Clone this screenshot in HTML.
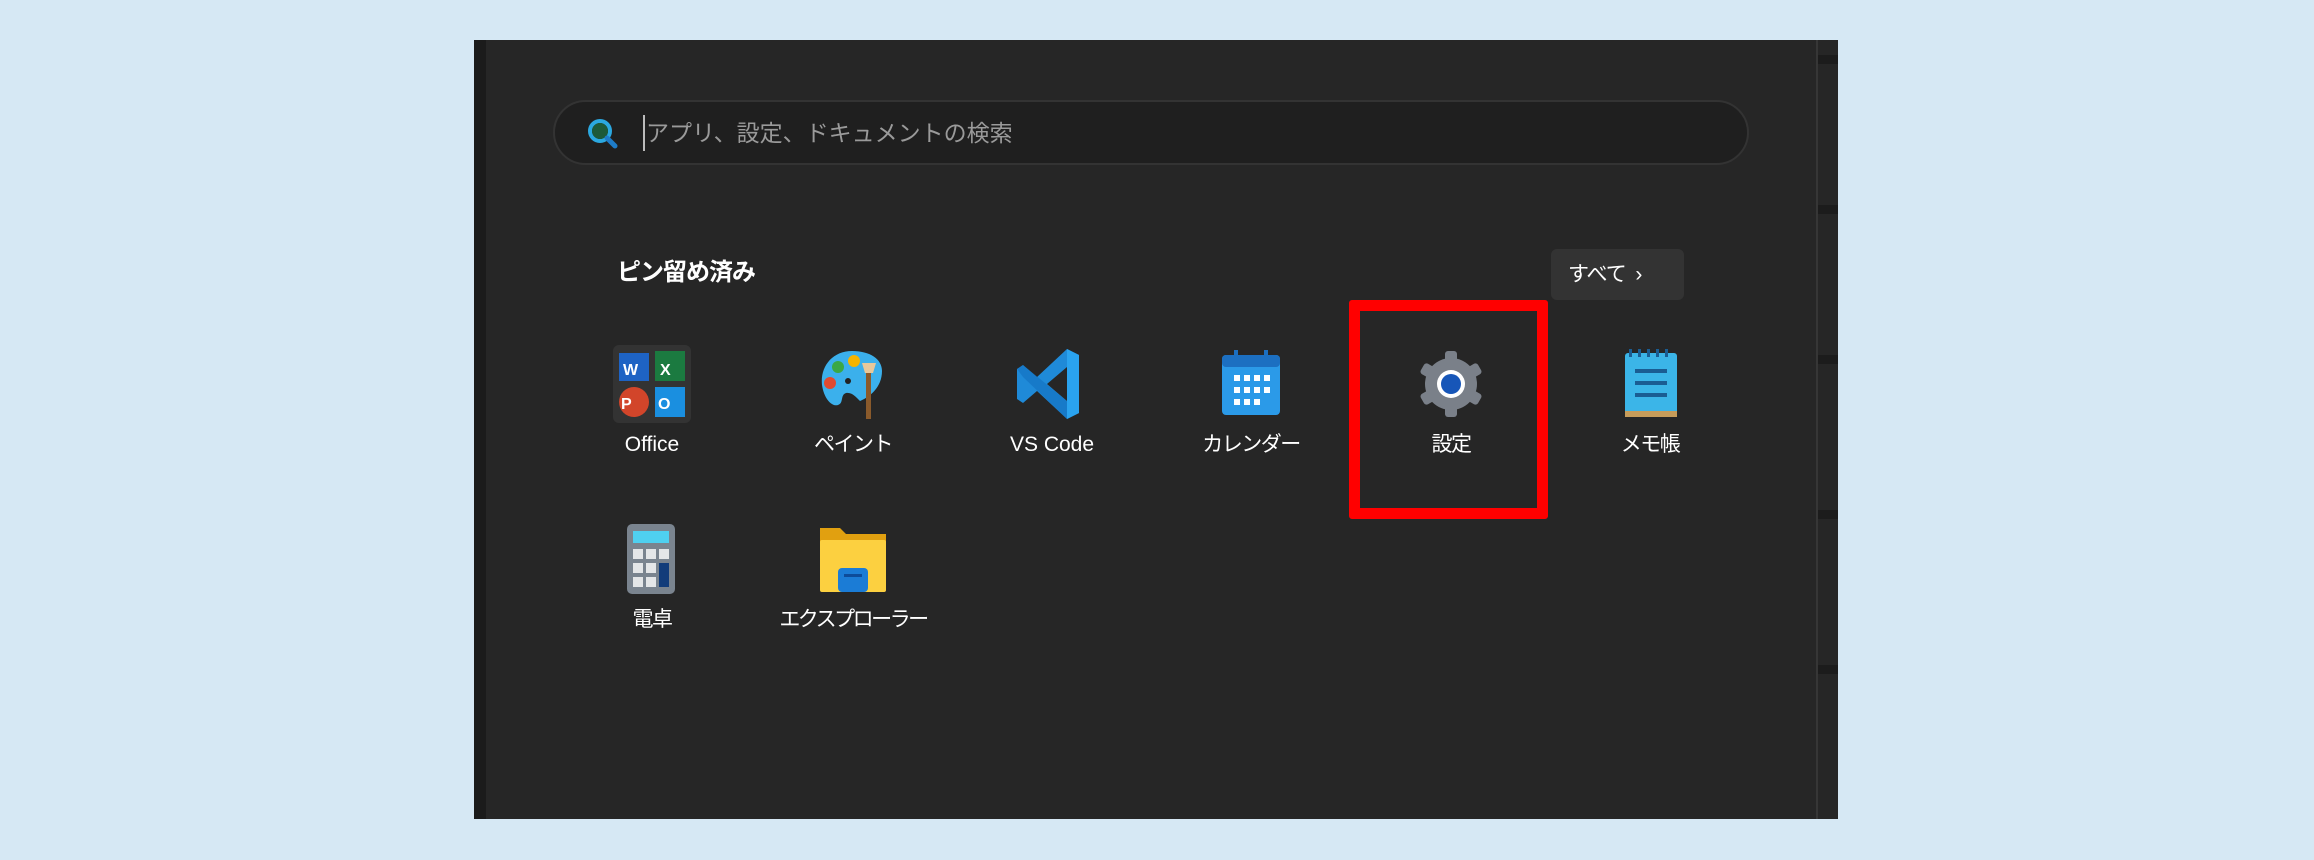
<!DOCTYPE html>
<html><head><meta charset="utf-8"><style>
*{margin:0;padding:0;box-sizing:border-box}
body{width:2314px;height:860px;background:#d6e8f4;position:relative;overflow:hidden;font-family:"Liberation Sans","Noto Sans CJK JP",sans-serif}
.panel{position:absolute;left:474px;top:40px;width:1364px;height:779px;background:#262626}
.lstrip{position:absolute;left:474px;top:40px;width:12px;height:779px;background:#1b1b1b}
.rline{position:absolute;left:1816px;top:40px;width:2px;height:779px;background:#363636}
.dash{position:absolute;left:1818px;width:20px;height:9px;background:#1c1c1c}
.search{position:absolute;left:553px;top:100px;width:1196px;height:65px;border-radius:33px;background:#1f1f1f;border:2px solid #333}
.ph{position:absolute;left:646px;top:115px;font-size:23px;color:#9a9a9a;line-height:36px;letter-spacing:0px}
.caret{position:absolute;left:643px;top:115px;width:2px;height:36px;background:#bbb}
.h{position:absolute;left:617px;top:256px;font-size:24px;font-weight:bold;color:#fff;line-height:34px;letter-spacing:-1px}
.btn{position:absolute;left:1551px;top:249px;width:133px;height:51px;border-radius:6px;background:#333;color:#fff;font-size:21px;line-height:51px;padding-left:17px;letter-spacing:-1px}
.app{position:absolute;width:200px;text-align:center;color:#fff;font-size:21px;white-space:nowrap;letter-spacing:-1.5px;line-height:28px}
.app svg{display:block;margin:0 auto 8px}
.red{position:absolute;left:1349px;top:300px;width:199px;height:219px;border:11px solid #ff0000;border-radius:3px}
</style></head><body>
<div class="panel"></div><div class="lstrip"></div><div class="rline"></div>
<div class="dash" style="top:55px"></div><div class="dash" style="top:205px"></div><div class="dash" style="top:355px"></div><div class="dash" style="top:510px"></div><div class="dash" style="top:665px"></div>
<div class="search"></div>
<svg style="position:absolute;left:586px;top:117px" width="34" height="34" viewBox="0 0 34 34"><circle cx="14" cy="14" r="10" fill="none" stroke="#2ba8e0" stroke-width="4"/><circle cx="14" cy="14" r="8" fill="#1d5a3a"/><path d="M21 21l8 8" stroke="#1e7cc8" stroke-width="5" stroke-linecap="round"/></svg>
<div class="caret"></div>
<div class="ph">アプリ、設定、ドキュメントの検索</div>
<div class="h">ピン留め済み</div>
<div class="btn">すべて &nbsp;›</div>

<div class="app" style="left:552px;top:345px;letter-spacing:0"><svg width="78" height="78" viewBox="0 0 78 78"><rect width="78" height="78" rx="6" fill="#333"/><rect x="6" y="8" width="30" height="28" fill="#1e63c4"/><text x="10" y="30" fill="#fff" font-size="16" font-weight="bold">W</text><rect x="42" y="6" width="30" height="30" fill="#1b7a40"/><text x="47" y="30" fill="#fff" font-size="16" font-weight="bold">X</text><circle cx="21" cy="57" r="15" fill="#d2452a"/><text x="8" y="64" fill="#fff" font-size="16" font-weight="bold">P</text><rect x="42" y="42" width="30" height="30" fill="#1a8fe0"/><text x="45" y="64" fill="#fff" font-size="16" font-weight="bold">O</text></svg>Office</div>
<div class="app" style="left:753px;top:345px"><svg width="78" height="78" viewBox="0 0 78 78"><path d="M38 6C18 6 6 22 8 40c2 14 10 22 16 20 6-2 2-10 8-12 6-1 10 4 14 8 10-4 22-14 22-30C68 14 56 6 38 6z" fill="#3bb0ec"/><circle cx="24" cy="22" r="6" fill="#3aa845"/><circle cx="40" cy="16" r="6" fill="#f5b400"/><circle cx="16" cy="38" r="6" fill="#e04a30"/><circle cx="34" cy="36" r="3" fill="#222"/><rect x="52" y="26" width="5" height="48" fill="#8a5a2b"/><path d="M48 18h14l-3 10h-8z" fill="#e8c89a"/></svg>ペイント</div>
<div class="app" style="left:952px;top:345px;letter-spacing:0"><svg width="78" height="78" viewBox="0 0 78 78"><path d="M54 4L66 10v58l-12 6L24 46 10 58 4 54V24l6-4 14 12z" fill="#1f8ad8"/><path d="M54 4L66 10v58l-12 6z" fill="#2aa3ef"/><path d="M54 22L34 39l20 17z" fill="#262626"/><path d="M4 24l6-4 44 36v18L10 32z" fill="#1370c0" opacity=".6"/></svg>VS Code</div>
<div class="app" style="left:1151px;top:345px"><svg width="78" height="78" viewBox="0 0 78 78"><rect x="10" y="10" width="58" height="60" rx="4" fill="#2b9ae8"/><rect x="10" y="10" width="58" height="12" rx="4" fill="#1c6fc1"/><rect x="22" y="5" width="4" height="12" fill="#1c6fc1"/><rect x="52" y="5" width="4" height="12" fill="#1c6fc1"/><g fill="#fff"><rect x="22" y="30" width="6" height="6"/><rect x="32" y="30" width="6" height="6"/><rect x="42" y="30" width="6" height="6"/><rect x="52" y="30" width="6" height="6"/><rect x="22" y="42" width="6" height="6"/><rect x="32" y="42" width="6" height="6"/><rect x="42" y="42" width="6" height="6"/><rect x="52" y="42" width="6" height="6"/><rect x="22" y="54" width="6" height="6"/><rect x="32" y="54" width="6" height="6"/><rect x="42" y="54" width="6" height="6"/></g></svg>カレンダー</div>
<div class="app" style="left:1351px;top:345px"><svg width="78" height="78" viewBox="0 0 78 78"><g fill="#7a8089"><circle cx="39" cy="39" r="26"/><rect x="33" y="6" width="12" height="66" rx="3"/><rect x="33" y="6" width="12" height="66" rx="3" transform="rotate(60 39 39)"/><rect x="33" y="6" width="12" height="66" rx="3" transform="rotate(120 39 39)"/></g><circle cx="39" cy="39" r="14" fill="#fff"/><circle cx="39" cy="39" r="10" fill="#1756b8"/></svg>設定</div>
<div class="app" style="left:1550px;top:345px"><svg width="78" height="78" viewBox="0 0 78 78"><rect x="14" y="8" width="52" height="64" rx="3" fill="#3bb5e8"/><rect x="14" y="66" width="52" height="6" fill="#c69c5a"/><g fill="#1a5d93"><rect x="24" y="24" width="32" height="4"/><rect x="24" y="36" width="32" height="4"/><rect x="24" y="48" width="32" height="4"/></g><g fill="#1a5d93"><rect x="18" y="4" width="3" height="8"/><rect x="27" y="4" width="3" height="8"/><rect x="36" y="4" width="3" height="8"/><rect x="45" y="4" width="3" height="8"/><rect x="54" y="4" width="3" height="8"/></g></svg>メモ帳</div>

<div class="app" style="left:552px;top:520px"><svg width="78" height="78" viewBox="0 0 78 78"><rect x="14" y="4" width="48" height="70" rx="5" fill="#7a848f"/><rect x="20" y="11" width="36" height="12" fill="#4fd0f0"/><g fill="#e4e6e8"><rect x="20" y="29" width="10" height="10"/><rect x="33" y="29" width="10" height="10"/><rect x="46" y="29" width="10" height="10"/><rect x="20" y="43" width="10" height="10"/><rect x="33" y="43" width="10" height="10"/><rect x="20" y="57" width="10" height="10"/><rect x="33" y="57" width="10" height="10"/></g><rect x="46" y="43" width="10" height="24" fill="#123c7a"/></svg>電卓</div>
<div class="app" style="left:753px;top:520px;letter-spacing:-2.5px"><svg width="78" height="78" viewBox="0 0 78 78"><path d="M6 8h20l6 6h40v22H6z" fill="#e1a010"/><rect x="6" y="20" width="66" height="52" rx="2" fill="#fcd040"/><rect x="24" y="48" width="30" height="24" rx="4" fill="#1b7cd6"/><rect x="30" y="54" width="18" height="3" fill="#0d4c9a"/></svg>エクスプローラー</div>

<div class="red"></div>
</body></html>
